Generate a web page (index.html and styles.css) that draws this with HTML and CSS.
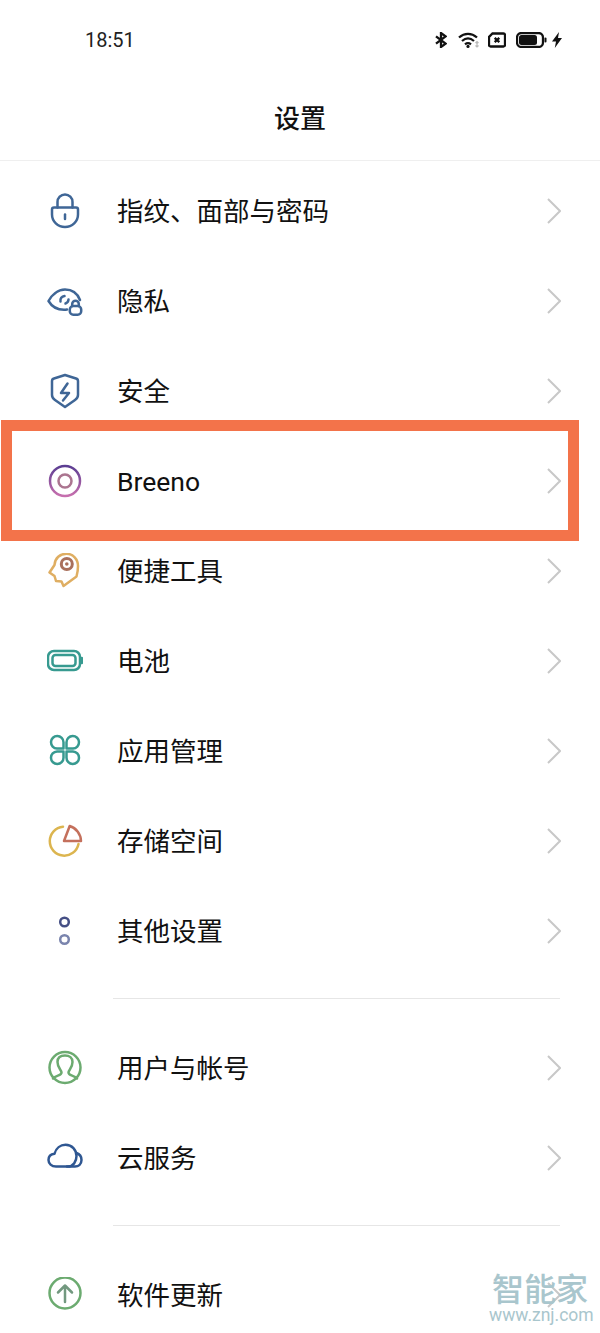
FILE: index.html
```html
<!DOCTYPE html>
<html lang="zh-CN">
  <head>
    <meta charset="UTF-8" />
    <meta name="viewport" content="width=device-width, initial-scale=1.0" />
    <title>设置</title>
    <link rel="stylesheet" href="styles.css">
  </head>
  <body>
    <div class="phone">
      <!-- 状态栏 -->
      <div class="status-bar">
        <span class="status-time">18:51</span>
        <div class="status-icons">
          <svg class="st-bt" viewBox="0 0 12 16"><path d="M1 4.300l9.600 7.400L6 15V1l4.600 3.300L1 11.700" /></svg>
          <svg class="st-wifi" viewBox="0 0 22 16">
            <path d="M1 5.500C6.500.6 13.500.6 19 5.500M4 9c3.700-3.200 8.300-3.200 12 0M7 12.300c1.900-1.500 4.100-1.500 6 0" />
            <circle class="st-fill" cx="10" cy="14.400" r="1.600" />
            <path class="st-faint" d="M19 9.500v5.500M17.500 11l1.500-1.500 1.500 1.500M17.500 13.500l1.500 1.500 1.500-1.500" />
          </svg>
          <svg class="st-sim" viewBox="0 0 18 15">
            <path d="M4.500 1H15.500a1.500 1.500 0 0 1 1.500 1.500v10a1.500 1.500 0 0 1-1.500 1.500H2.500A1.500 1.500 0 0 1 1 12.500V4.500z" />
            <path d="M6.700 5.300l4.600 4.400M11.300 5.300l-4.600 4.400" />
          </svg>
          <svg class="st-batt" viewBox="0 0 31 16">
            <rect x="1" y="1" width="26" height="14" rx="4.500" />
            <rect class="st-fill" x="3" y="3" width="18" height="10" rx="2.500" />
            <rect class="st-fill" x="28.500" y="5.500" width="2" height="5" rx="1" />
          </svg>
          <svg class="st-bolt" viewBox="0 0 10 16"><path class="st-fill" d="M7 0L0 9.500h4L2.800 16 10 6H6z" /></svg>
        </div>
      </div>

      <header class="title-bar">
        <h1>设置</h1>
      </header>

      <!-- 设置列表 -->
      <ul class="setting-group first">
        <li class="setting-row">
          <svg class="row-icon ic-blue" viewBox="0 0 36 36">
            <path d="M10.500 14.500V9a7.500 7.500 0 0 1 15 0v5.500" />
            <path d="M7 14.500h22a2 2 0 0 1 2 2v5a13 12.500 0 0 1-26 0v-5a2 2 0 0 1 2-2z" />
            <path d="M18 21.500v4.500" />
          </svg>
          <span class="row-label">指纹、面部与密码</span>
          <svg class="chevron" viewBox="0 0 14 26"><path d="M1 1l12 12L1 25" /></svg>
        </li>
        <li class="setting-row">
          <svg class="row-icon ic-blue" viewBox="0 0 36 36">
            <path d="M20 26.500c-1 .2-2 .3-3 .3C10 26.800 4.500 23 1.500 18 4.500 12.500 10.500 6.500 18 6.500c7 0 12.500 4 15 10.500" />
            <path d="M13.500 18.500a4.500 4.500 0 0 1 4-5.500M21.500 16.500a4.500 4.500 0 0 1-3 4" />
            <path d="M25.200 23v-2a3.300 3.300 0 0 1 6.600 0v2" />
            <rect x="22.800" y="23" width="11.400" height="8.700" rx="3.500" />
          </svg>
          <span class="row-label">隐私</span>
          <svg class="chevron" viewBox="0 0 14 26"><path d="M1 1l12 12L1 25" /></svg>
        </li>
        <li class="setting-row">
          <svg class="row-icon ic-blue" viewBox="0 0 36 36">
            <path d="M18 2l11 3.500q2 .6 2 2.500V22q0 3-3 5l-10 7-10-7q-3-2-3-5V8q0-1.900 2-2.500z" />
            <path d="M20.500 10.500L14 20h8l-6 7.500" />
          </svg>
          <span class="row-label">安全</span>
          <svg class="chevron" viewBox="0 0 14 26"><path d="M1 1l12 12L1 25" /></svg>
        </li>
        <li class="setting-row">
          <svg class="row-icon" viewBox="0 0 36 36">
            <defs>
              <linearGradient id="breenoRing" x1="0" y1="0" x2="0" y2="1">
                <stop offset="0" stop-color="#5b3d92" />
                <stop offset="1" stop-color="#c76fae" />
              </linearGradient>
            </defs>
            <circle cx="18" cy="18" r="15" stroke="url(#breenoRing)" />
            <circle cx="18" cy="18" r="6.500" stroke="#ab7590" />
          </svg>
          <span class="row-label">Breeno</span>
          <svg class="chevron" viewBox="0 0 14 26"><path d="M1 1l12 12L1 25" /></svg>
        </li>
        <li class="setting-row">
          <svg class="row-icon ic-orange" viewBox="0 0 36 36">
            <path d="M29.500 23.500L16.500 33l-2-4.500L9 28l-1.500-5-5-3.500 5-7.500C8 5 13 .8 19.500.8 26 .8 31 6 31 13c0 4-.5 7-1.500 10.500z" />
            <circle class="ic-target" cx="19.800" cy="11" r="5.500" />
            <circle class="ic-dot" cx="19.800" cy="11" r="1.800" />
          </svg>
          <span class="row-label">便捷工具</span>
          <svg class="chevron" viewBox="0 0 14 26"><path d="M1 1l12 12L1 25" /></svg>
        </li>
        <li class="setting-row">
          <svg class="row-icon ic-teal" viewBox="0 0 36 36">
            <rect x="1" y="8" width="32" height="19" rx="6" />
            <rect x="5.500" y="12" width="23" height="11" rx="3" />
            <path d="M34.800 15v5" />
          </svg>
          <span class="row-label">电池</span>
          <svg class="chevron" viewBox="0 0 14 26"><path d="M1 1l12 12L1 25" /></svg>
        </li>
        <li class="setting-row">
          <svg class="row-icon ic-teal" viewBox="0 0 36 36">
            <path d="M16.500 15.500H10a6.250 6.250 0 1 1 6.500-6.250z" />
            <path d="M19.500 15.500H26a6.250 6.250 0 1 0-6.500-6.250z" />
            <path d="M16.500 18.500H10a6.250 6.250 0 1 0 6.500 6.250z" />
            <path d="M19.500 18.500H26a6.250 6.250 0 1 1-6.500 6.250z" />
          </svg>
          <span class="row-label">应用管理</span>
          <svg class="chevron" viewBox="0 0 14 26"><path d="M1 1l12 12L1 25" /></svg>
        </li>
        <li class="setting-row">
          <svg class="row-icon" viewBox="0 0 36 36">
            <path stroke="#dcb54f" d="M16 3.700A14.500 14.500 0 1 0 31.500 21" />
            <path stroke="#c4705c" d="M17 18l5.700-15A16 16 0 0 1 34 18z" />
          </svg>
          <span class="row-label">存储空间</span>
          <svg class="chevron" viewBox="0 0 14 26"><path d="M1 1l12 12L1 25" /></svg>
        </li>
        <li class="setting-row">
          <svg class="row-icon" viewBox="0 0 36 36">
            <circle cx="17.500" cy="9" r="4.300" stroke="#454f85" />
            <circle cx="17.500" cy="26.500" r="4.300" stroke="#7a84ad" />
          </svg>
          <span class="row-label">其他设置</span>
          <svg class="chevron" viewBox="0 0 14 26"><path d="M1 1l12 12L1 25" /></svg>
        </li>
      </ul>

      <ul class="setting-group">
        <li class="setting-row">
          <svg class="row-icon ic-green" viewBox="0 0 36 36">
            <circle cx="18" cy="17.500" r="15.500" />
            <path d="M6 28.500c3-3.500 8.500-2.500 8.500-6 0-2.500-4-4.500-4-10.500 0-4.500 3-6.500 7.500-6.500s7.500 2.500 7.500 6.500c0 6-4 8-4 10.500 0 3.500 5.500 2.500 8.500 6" />
          </svg>
          <span class="row-label">用户与帐号</span>
          <svg class="chevron" viewBox="0 0 14 26"><path d="M1 1l12 12L1 25" /></svg>
        </li>
        <li class="setting-row">
          <svg class="row-icon ic-navy" viewBox="0 0 36 36">
            <path d="M9 26.500c-4.500 0-7.500-3-7.500-6.500s2.500-5.700 6-6.200C9 8 13.500 4.800 18.500 4.800c6.500 0 11 5.200 11 11.200 0 5-3 10.500-9 10.500z" />
            <path d="M29.500 13c3 1 5 3.500 5 7 0 4-3 6.500-6.500 6.500h-8" />
          </svg>
          <span class="row-label">云服务</span>
          <svg class="chevron" viewBox="0 0 14 26"><path d="M1 1l12 12L1 25" /></svg>
        </li>
      </ul>

      <ul class="setting-group">
        <li class="setting-row">
          <svg class="row-icon ic-green" viewBox="0 0 36 36">
            <circle cx="18" cy="16" r="15.500" />
            <path class="ic-arrow" d="M18 25V9M11 15.500L18 8.500l7 7" />
          </svg>
          <span class="row-label">软件更新</span>
          <svg class="chevron" viewBox="0 0 14 26"><path d="M1 1l12 12L1 25" /></svg>
        </li>
      </ul>

      <!-- 高亮框 -->
      <div class="highlight-box"></div>

      <div class="site-mark">
        <div class="site-mark-name">智能家</div>
        <div class="site-mark-url">www.znj.com</div>
      </div>
    </div>
  </body>
</html>
```

FILE: styles.css
```css
:root {
  --text: #111111;
  --divider: #e6e6e6;
  --chevron: #c8c8c8;
  --highlight: #f3734a;
}

* {
  margin: 0;
  padding: 0;
  box-sizing: border-box;
}

body {
  background: #ffffff;
  color: var(--text);
  font-family: Roboto, "Noto Sans CJK SC", sans-serif;
  overflow: hidden;
}

.phone {
  position: relative;
  width: 600px;
  height: 1333px;
  overflow: hidden;
}

/* 状态栏 */
.status-bar {
  height: 80px;
  padding: 0 38px 0 85px;
  display: flex;
  align-items: center;
  justify-content: space-between;
}

.status-time {
  font-size: 20px;
  color: #222;
}

.status-icons {
  display: flex;
  align-items: center;
}

.status-icons svg {
  height: 16px;
  fill: none;
  stroke: #111;
  stroke-width: 2.300;
}

.status-icons .st-fill {
  fill: #111;
  stroke: none;
}

.status-icons .st-faint {
  stroke: #b9b9b9;
  stroke-width: 1.200;
}

.st-bt {
  width: 12px;
  margin-right: 11px;
}

.st-wifi {
  width: 22px;
  margin-right: 8px;
}

.st-sim {
  width: 18px;
  height: 15px;
  margin-right: 10px;
}

.st-batt {
  width: 31px;
  margin-right: 5px;
}

.st-bolt {
  width: 10px;
}

/* 标题栏 */
.title-bar {
  height: 81px;
  padding-bottom: 7px;
  display: flex;
  align-items: center;
  justify-content: center;
  border-bottom: 1px solid #efefef;
}

.title-bar h1 {
  font-size: 26px;
  font-weight: 500;
}

/* 设置列表 */
.setting-group {
  list-style: none;
  margin-top: 22px;
  border-top: 1px solid transparent;
  position: relative;
  padding-top: 24px;
}

.setting-group::before {
  content: "";
  position: absolute;
  top: -1px;
  left: 113px;
  right: 40px;
  height: 1px;
  background: var(--divider);
}

.setting-group.first {
  margin-top: 0;
  border-top: 0;
  padding-top: 5px;
}

.setting-group.first::before {
  display: none;
}

.setting-row {
  height: 90px;
  padding: 0 39px 0 47px;
  display: flex;
  align-items: center;
}

.row-icon {
  width: 36px;
  height: 36px;
  flex: none;
  fill: none;
  stroke-width: 2.500;
  stroke-linejoin: round;
  stroke-linecap: round;
}

.ic-blue {
  stroke: #3f6696;
}

.ic-orange {
  stroke: #dfae62;
}

.ic-orange .ic-target {
  stroke: #a9705c;
  stroke-width: 3;
}

.ic-orange .ic-dot {
  stroke: none;
  fill: #a9705c;
}

.ic-teal {
  stroke: #379a90;
}

.ic-green {
  stroke: #6cab70;
}

.ic-green .ic-arrow {
  stroke: #72987f;
}

.ic-navy {
  stroke: #2f5792;
}

.row-label {
  flex: 1;
  margin-left: 34px;
  margin-top: 2px;
  font-size: 26.500px;
  line-height: 36px;
}

.chevron {
  width: 14px;
  height: 26px;
  flex: none;
  fill: none;
  stroke: var(--chevron);
  stroke-width: 2;
}

/* 高亮框 */
.highlight-box {
  position: absolute;
  left: 1px;
  top: 420px;
  width: 578px;
  height: 121px;
  border: 11px solid var(--highlight);
}

.site-mark {
  position: absolute;
  right: 9px;
  top: 1268px;
  width: 102px;
  text-align: center;
  color: #a9c6cd;
  font-family: "Noto Sans CJK SC", Roboto, sans-serif;
}

.site-mark-name {
  font-size: 32px;
  font-weight: 500;
  line-height: 38px;
}

.site-mark-url {
  font-family: Roboto, sans-serif;
  font-size: 17.500px;
  line-height: 18px;
}
```
